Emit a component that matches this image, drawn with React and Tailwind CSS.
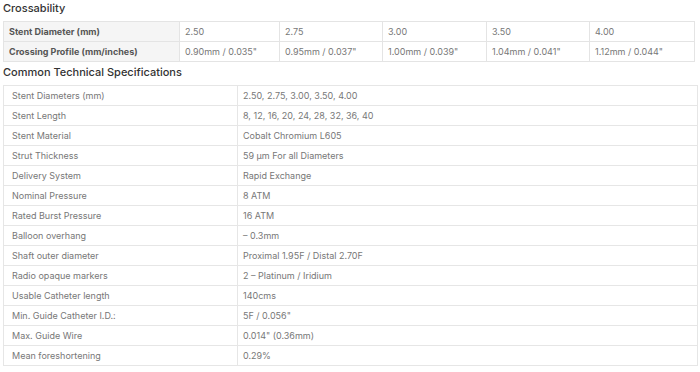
import React from "react";

const diameters = ["2.50", "2.75", "3.00", "3.50", "4.00"];
const profiles = [
  "0.90mm / 0.035\"",
  "0.95mm / 0.037\"",
  "1.00mm / 0.039\"",
  "1.04mm / 0.041\"",
  "1.12mm / 0.044\"",
];

const specs = [
  ["Stent Diameters (mm)", "2.50, 2.75, 3.00, 3.50, 4.00"],
  ["Stent Length", "8, 12, 16, 20, 24, 28, 32, 36, 40"],
  ["Stent Material", "Cobalt Chromium L605"],
  ["Strut Thickness", "59 µm For all Diameters"],
  ["Delivery System", "Rapid Exchange"],
  ["Nominal Pressure", "8 ATM"],
  ["Rated Burst Pressure", "16 ATM"],
  ["Balloon overhang", "– 0.3mm"],
  ["Shaft outer diameter", "Proximal 1.95F / Distal 2.70F"],
  ["Radio opaque markers", "2 – Platinum / Iridium"],
  ["Usable Catheter length", "140cms"],
  ["Min. Guide Catheter I.D.:", "5F / 0.056\""],
  ["Max. Guide Wire", "0.014\" (0.36mm)"],
  ["Mean foreshortening", "0.29%"],
];

const colWidths = ["w-[176px]", "w-[100px]", "w-[103px]", "w-[104px]", "w-[103px]", "w-[105px]"];

export default function App() {
  return (
    <div className="bg-white w-[700px] h-[372px] overflow-hidden px-[3px] font-['Inter',sans-serif]">
      <h2 className="h-[21px] pt-[1px] leading-[15px] text-[11px] font-medium text-[#333]">Crossability</h2>
      <table className="border-collapse w-[692px] table-fixed text-[9px]">
        <colgroup>
          {colWidths.map((w, i) => (
            <col key={i} className={w} />
          ))}
        </colgroup>
        <tbody>
          <tr className="h-[20px]">
            <td className="border border-[#e4e4e4] bg-[#f5f5f5] px-[5px] font-bold text-[#555]">Stent Diameter (mm)</td>
            {diameters.map((d) => (
              <td key={d} className="border border-[#e4e4e4] px-[5px] text-[#777]">{d}</td>
            ))}
          </tr>
          <tr className="h-[20px]">
            <td className="border border-[#e4e4e4] bg-[#f5f5f5] px-[5px] font-bold text-[#555]">Crossing Profile (mm/inches)</td>
            {profiles.map((p) => (
              <td key={p} className="border border-[#e4e4e4] px-[5px] text-[#777]">{p}</td>
            ))}
          </tr>
        </tbody>
      </table>
      <h2 className="h-[23px] pb-[3px] flex items-center text-[11px] font-medium text-[#333]">Common Technical Specifications</h2>
      <table className="border-collapse w-[694px] table-fixed text-[9px]">
        <colgroup>
          <col className="w-[234px]" />
          <col className="w-[460px]" />
        </colgroup>
        <tbody>
          {specs.map(([label, value]) => (
            <tr key={label} className="h-[20px]">
              <td className="border border-[#e6e6e6] px-[8px] text-[#777]">{label}</td>
              <td className="border border-[#e6e6e6] px-[5px] text-[#777]">{value}</td>
            </tr>
          ))}
        </tbody>
      </table>
    </div>
  );
}
